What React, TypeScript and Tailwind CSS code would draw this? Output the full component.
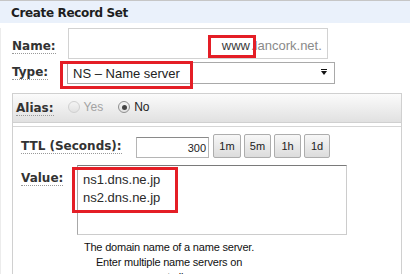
import React from 'react';

const label = "font-['DejaVu_Sans',sans-serif] font-bold text-[12px] leading-[14px] text-[#333] border-b border-dotted border-[#999]";

const Radio = ({ checked, disabled }: { checked?: boolean; disabled?: boolean }) => (
  <span
    className={`w-[12px] h-[12px] rounded-full border flex items-center justify-center bg-gradient-to-b from-[#f4f4f4] to-[#e2e2e2] ${
      disabled ? 'border-[#d0d0d0]' : 'border-[#8f8f8f]'
    }`}
  >
    {checked && <span className="w-[5px] h-[5px] rounded-full bg-[#444]" />}
  </span>
);

const TtlButton = ({ text, w }: { text: string; w: string }) => (
  <button
    className={`${w} h-[24px] rounded-[2px] border border-[#adadad] bg-gradient-to-b from-[#f7f7f7] to-[#dcdcdc] text-[11px] leading-[13px] text-[#222] flex items-center justify-center pt-[1px]`}
  >
    {text}
  </button>
);

export default function App() {
  return (
    <div className="relative w-[410px] h-[274px] overflow-hidden bg-white border-t border-[#c6c6c6] font-['Liberation_Sans',Arial,sans-serif]">
      {/* header */}
      <div className="h-[22px] bg-[#eaf1fb] pl-[11px] pt-[5px] flex items-start">
        <span className="font-['DejaVu_Sans',sans-serif] font-bold text-[12px] leading-[14px] tracking-[-0.35px] text-[#1e1e1e]">
          Create Record Set
        </span>
      </div>

      <div className="border-l border-[#ececec] h-full">
        {/* Name */}
        <div className="flex items-start mt-[5px]">
          <div className="w-[67px] pl-[11px] pt-[11px] flex items-start">
            <span className={label}>Name:</span>
          </div>
          <div className="w-[260px] h-[31px] border border-[#d2d2d2] flex pt-[9px] text-[13px] leading-[15px]">
            <div className="w-[182px] text-right pr-[1px] text-[#3a3a3a]">www</div>
            <div className="text-[#8a8a8a] whitespace-nowrap overflow-hidden">.lancork.net.</div>
          </div>
        </div>

        {/* Type */}
        <div className="flex items-start mt-[3px]">
          <div className="w-[66px] pl-[11px] pt-[3px] flex items-start">
            <span className={label}>Type:</span>
          </div>
          <div className="w-[268px] h-[22px] border border-[#a9a9a9] flex justify-between pl-[5px] pr-[7px] pt-[3px] text-[13px] leading-[15px] text-[#222]">
            <span>NS – Name server</span>
            <svg width="6" height="7" viewBox="0 0 6 7" className="mt-[3px]">
              <rect x="0" y="0" width="6" height="1" fill="#111" />
              <path d="M0 2 L6 2 L3 6 Z" fill="#111" />
            </svg>
          </div>
        </div>

        {/* Alias box */}
        <div className="ml-[11px] mt-[9px] w-[390px] border-l border-r border-t border-[#d0d0d0]">
          <div className="h-[29px] bg-gradient-to-b from-[#fbfbfb] to-[#e1e1e1] border-b border-[#d0d0d0] flex items-start pl-[3px] pt-[7px]">
            <span className={label}>Alias:</span>
            <div className="flex items-center ml-[14px] mt-[-1px] text-[12px] leading-[14px]">
              <Radio disabled />
              <span className="ml-[4px] text-[#a3a3a3]">Yes</span>
              <span className="ml-[15px]">
                <Radio checked />
              </span>
              <span className="ml-[4px] text-[#222]">No</span>
            </div>
          </div>

          <div className="mt-[3px] border-t border-[#d6d6d6] h-[160px]">
            {/* TTL */}
            <div className="flex items-start pt-[7px]">
              <div className="w-[123px] pl-[8px] pt-[5px] flex items-start">
                <span className={label}>TTL (Seconds):</span>
              </div>
              <div className="mt-[3px] w-[73px] h-[21px] border border-[#b5b5b5] border-t-[#8a8a8a] text-right pr-[2px] pt-[4px] text-[11px] leading-[13px] text-[#222]">
                300
              </div>
              <div className="flex gap-[3px] ml-[4px]">
                <TtlButton text="1m" w="w-[28px]" />
                <TtlButton text="5m" w="w-[27px]" />
                <TtlButton text="1h" w="w-[27px]" />
                <TtlButton text="1d" w="w-[26px]" />
              </div>
            </div>

            {/* Value */}
            <div className="flex items-start mt-[7px]">
              <div className="w-[64px] pl-[8px] pt-[6px] flex items-start">
                <span className={label}>Value:</span>
              </div>
              <div className="w-[270px] h-[70px] border border-[#cccccc] border-t-[#7a7a7a] border-l-[#a8a8a8] pl-[5px] pt-[5px] text-[13px] leading-[18px] text-[#2a2a2a]">
                <div>ns1.dns.ne.jp</div>
                <div>ns2.dns.ne.jp</div>
              </div>
            </div>

            <div className="ml-[64px] w-[184px] mt-[5px] text-center text-[11px] leading-[15px] tracking-[-0.2px] text-[#111]">
              The domain name of a name server.
              <br />
              Enter multiple name servers on
              <br />
              separate lines.
            </div>
          </div>
        </div>
      </div>

      {/* annotation boxes */}
      <div className="absolute left-[208px] top-[34px] w-[48px] h-[23px] border-[3px] border-[#e41e26]" />
      <div className="absolute left-[60px] top-[60px] w-[133px] h-[28px] border-[3px] border-[#e41e26]" />
      <div className="absolute left-[72px] top-[166px] w-[106px] h-[46px] border-[3px] border-[#e41e26]" />
    </div>
  );
}
